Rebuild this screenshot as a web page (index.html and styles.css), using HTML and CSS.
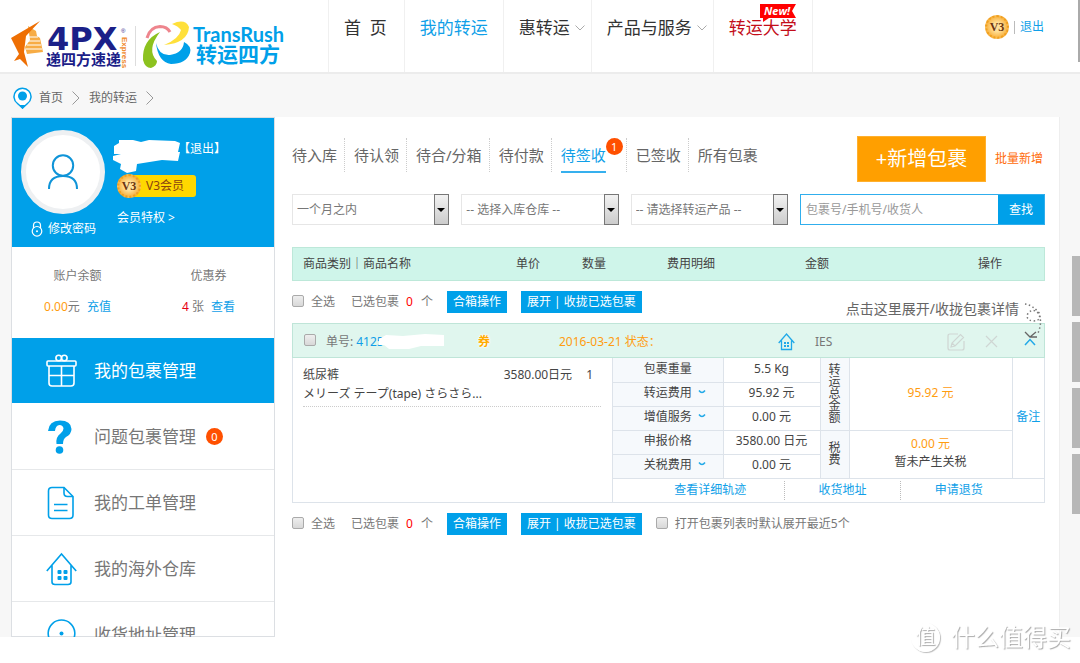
FILE: index.html
```html
<!DOCTYPE html>
<html lang="zh-CN">
<head>
<meta charset="utf-8">
<title>我的转运 - 转运四方</title>
<link rel="stylesheet" href="styles.css">
</head>
<body>
<div class="app">
  <header class="header">
    <a class="logo" href="#" aria-label="转运四方">
      <svg width="318" height="72" viewBox="0 0 318 72">
        <path d="M28 26 L36 31 L37 36 L40 38 L43 52 L27 54 L25 47 L30 40Z" fill="#f7ac45"/>
        <path d="M29 37h9M28 41h12M27 45h14M26 49h16" stroke="#fff" stroke-width="1"/>
        <path d="M40 21 L11 38 L19 54 L14 61 L20 59 L28 67 L24 52 L26 36Z" fill="#ee6f04"/>
        <text class="logo-4px" x="47" y="50">4PX</text>
        <text class="logo-cn" x="46" y="65">递四方速递</text>
        <text class="logo-express" transform="translate(122 37) rotate(90)">Express</text>
        <text class="logo-reg" x="121" y="33">®</text>
        <path d="M135.500 26v40" stroke="#ddd"/>
        <path d="M147 38 Q150 27 160 26.500 Q167 26.500 170 32" fill="none" stroke="#ee858d" stroke-width="3"/>
        <path d="M172 24 Q185 18 189 27 Q188 43 164 45 Q179 39 181 30 Q178 26 172 24Z" fill="#ffe03b"/>
        <path d="M160 32 Q142 40 143 60 Q145 68 151 68 Q157 66 157 61 Q146 50 160 32Z" fill="#8cc21f"/>
        <path d="M156 43 Q159 56 170 55 Q183 53 184 42 Q192 46 190 53 Q186 64 171 64 Q158 62 156 43Z" fill="#00a0e9"/>
        <text class="logo-en" x="193" y="42">TransRush</text>
        <text class="logo-cn2" x="196" y="62">转运四方</text>
      </svg>
    </a>
    <nav class="nav">
      <a href="#">首&nbsp; 页</a>
      <a href="#" class="nav-on">我的转运</a>
      <a href="#" class="nav-drop">惠转运<svg width="10" height="6" viewBox="0 0 10 6"><path d="M0.500 0.500 L5 5 L9.500 0.500"/></svg></a>
      <a href="#" class="nav-drop">产品与服务<svg width="10" height="6" viewBox="0 0 10 6"><path d="M0.500 0.500 L5 5 L9.500 0.500"/></svg></a>
      <a href="#" class="nav-red">转运大学<span class="new"><svg width="36" height="18" viewBox="0 0 36 18"><path d="M0 0H36L32 7L36 14H9L3 18V14H0Z" fill="#f00"/><text x="4" y="11">New!</text></svg></span></a>
    </nav>
    <div class="user">
      <span class="medal">V3</span><span class="bar"></span><a href="#">退出</a>
    </div>
  </header>

  <div class="crumbs">
    <svg width="20" height="22" viewBox="0 0 20 22"><path d="M9.500 21 L4.500 16.500 A8.500 8.500 0 1 1 14.500 16.500Z" fill="#fff" stroke="#00a0e9" stroke-width="1.500"/><path d="M6 18 L9.500 22 L13 18Z" fill="#00a0e9"/><circle cx="9.500" cy="9" r="4.500" fill="#00a0e9"/></svg>
    <a href="#">首页</a>
    <svg class="sep" width="8" height="14" viewBox="0 0 8 14"><path d="M0.500 0.500 L7 7 L0.500 13.500"/></svg>
    <a href="#">我的转运</a>
    <svg class="sep" width="8" height="14" viewBox="0 0 8 14"><path d="M0.500 0.500 L7 7 L0.500 13.500"/></svg>
  </div>

  <div class="main">
    <aside class="side">
      <section class="profile">
        <div class="profile-left">
          <div class="avatar"><svg width="30" height="36" viewBox="0 0 30 36"><g fill="none" stroke="#0f94d8" stroke-width="2"><circle cx="15" cy="11.500" r="10.200"/><path d="M1 35 Q1 22 15 22 Q29 22 29 35"/></g></svg></div>
          <a class="pwd" href="#"><svg width="12" height="16" viewBox="0 0 12 16"><g fill="none" stroke="#fff" stroke-width="1.200"><circle cx="6" cy="10.300" r="4.800"/><path d="M2.500 7V4.500a3.500 3.500 0 0 1 7 0V7"/></g><circle cx="6" cy="10.300" r="1" fill="#fff"/></svg>修改密码</a>
        </div>
        <div class="profile-right">
          <div class="who"><svg width="68" height="33" viewBox="0 0 68 33"><path d="M1 6 L6 3 L6 0 L20 0 L28 2 L36 0 L62 1 L67 3 L65 12 L67 12 L65 21 L49 20 L24 24 L23 31 L14 33 L7 29 L8 24 L0 20 L0 16 L8 14 L1 14Z" fill="#fff"/></svg><a href="#">【退出】</a></div>
          <div class="level"><span class="medal">V3</span><span class="tag">V3会员</span></div>
          <a class="priv" href="#">会员特权 &gt;</a>
        </div>
      </section>
      <section class="account">
        <div><h3>账户余额</h3><p><span class="orange">0.00</span>元 <a href="#">充值</a></p></div>
        <div><h3>优惠券</h3><p><span class="red">4</span> 张 <a href="#">查看</a></p></div>
      </section>
      <nav class="menu">
        <a href="#" class="menu-on"><svg width="32" height="34" viewBox="0 0 32 34"><g fill="none" stroke="#fff" stroke-width="1.600"><rect x="1" y="7" width="29" height="5" rx="1"/><path d="M3 12V29q0 3 3 3H25q3 0 3-3V12M15.500 12V32M3 21.500H28"/><circle cx="12.700" cy="4" r="2.800"/><circle cx="18.300" cy="4" r="2.800"/></g></svg>我的包裹管理</a>
        <a href="#"><svg width="32" height="34" viewBox="0 0 32 34"><path d="M2 11 Q3 0.500 14 0.500 Q25 0.500 25.500 9 Q25.500 14 20 17 Q17 19 17 24 H10.500 Q9.500 17 14.500 13.500 Q17.500 11 17.500 8.500 Q17 5 13.500 5 Q9.500 5.500 9 11Z" fill="#00a0e9"/><circle cx="13.500" cy="30" r="3.800" fill="#00a0e9"/></svg>问题包裹管理<span class="count">0</span></a>
        <a href="#"><svg width="32" height="34" viewBox="0 0 32 34"><g fill="none" stroke="#00a0e9" stroke-width="1.600"><path d="M18 1.500H6Q2.500 1.500 2.500 5V29Q2.500 32.500 6 32.500H23.500Q27 32.500 27 29V10.500Z"/><path d="M18 1.500V7Q18 10.500 21.500 10.500H27M8 18.500H21.500M8 24.500H21.500"/></g></svg>我的工单管理</a>
        <a href="#"><svg width="32" height="34" viewBox="0 0 32 34"><g fill="none" stroke="#00a0e9" stroke-width="1.600"><path d="M0.800 19 L15.500 2 L30.200 19M6 13.500V30Q6 32.500 9 32.500H22Q25 32.500 25 30V13.500"/></g><g fill="#00a0e9"><rect x="11.500" y="18" width="4" height="4" rx="1"/><rect x="17.500" y="18" width="4" height="4" rx="1"/><rect x="11.500" y="24" width="4" height="4" rx="1"/><rect x="17.500" y="24" width="4" height="4" rx="1"/></g></svg>我的海外仓库</a>
        <a href="#"><svg width="32" height="34" viewBox="0 0 32 34"><path d="M15.500 33 L5 23.500 A13.300 13.300 0 1 1 26 23.500Z" fill="none" stroke="#00a0e9" stroke-width="1.600"/><circle cx="15.500" cy="15.500" r="2" fill="#00a0e9"/></svg>收货地址管理</a>
      </nav>
    </aside>

    <main class="content">
      <div class="top">
        <nav class="tabs">
          <a href="#">待入库</a><a href="#">待认领</a><a href="#">待合/分箱</a><a href="#">待付款</a><a href="#" class="tab-on"><span>待签收</span><b class="count">1</b></a><a href="#">已签收</a><a href="#">所有包裹</a>
        </nav>
        <button class="add" type="button">+新增包裹</button>
        <a class="batch" href="#">批量新增</a>
      </div>

      <form class="filters">
        <div class="pick"><select aria-label="时间"><option>一个月之内</option></select></div>
        <div class="pick"><select aria-label="仓库"><option>-- 选择入库仓库 --</option></select></div>
        <div class="pick"><select aria-label="转运产品"><option>-- 请选择转运产品 --</option></select></div>
        <div class="search"><input type="text" aria-label="搜索" placeholder="包裹号/手机号/收货人"><button type="button">查找</button></div>
      </form>

      <table class="head">
        <tr><th class="c-name">商品类别｜商品名称</th><th class="c-price">单价</th><th class="c-num">数量</th><th class="c-fee">费用明细</th><th class="c-sum">金额</th><th>操作</th></tr>
      </table>

      <div class="tools">
        <label class="all"><input type="checkbox">全选</label>
        <span class="chosen">已选包裹<b>0</b>个</span>
        <button type="button">合箱操作</button>
        <button type="button">展开 | 收拢已选包裹</button>
        <span class="hint">点击这里展开/收拢包裹详情
          <svg width="20" height="44" viewBox="0 0 20 44"><path d="M2 3 Q10 4 17 13 Q18 20 10 20 Q2 19 5 12 Q10 7 15 12 Q20 20 15 32" fill="none" stroke="#777" stroke-dasharray="1.500 2.500" stroke-width="1.500"/><path d="M2 31 L7 36 L14 36M7 36 L13 31" fill="none" stroke="#666" stroke-width="1.300"/></svg>
        </span>
      </div>

      <article class="order">
        <header class="order-head">
          <div class="no"><input type="checkbox" aria-label="选择包裹"><span>单号:</span><a href="#">4125</a><svg width="66" height="16" viewBox="0 0 66 16"><path d="M0 5 L7 1 L24 2 L46 0 L65 1 L65 12 L42 12 L30 15 L10 15 L5 11 L0 11Z" fill="#fff"/></svg></div>
          <b class="coupon">券</b>
          <span class="orange">2016-03-21 状态：</span>
          <svg width="17" height="18" viewBox="0 0 17 18"><path d="M0.700 10 L8.500 1 L16.300 10M3.500 7.500V16.500H13.500V7.500" fill="none" stroke="#21a9e8" stroke-width="1.300"/><path d="M6 9h2v2H6zM9 9h2v2H9zM6 12h2v2H6zM9 12h2v2H9z" fill="#21a9e8"/></svg>
          <span>IES</span>
          <div class="acts">
            <svg width="18" height="18" viewBox="0 0 18 18"><path d="M11 1H3Q1 1 1 3V15Q1 17 3 17H15Q17 17 17 15V8M4 14 L5 10 L13.500 1.500 L16.500 4.500 L8 13ZM5 10 L8 13" fill="none" stroke="#cfd6d3" stroke-width="1.200"/></svg>
            <svg width="13" height="13" viewBox="0 0 13 13"><path d="M1 1 L12 12M12 1 L1 12" stroke="#cfd6d3" stroke-width="1.200"/></svg>
            <svg width="12" height="8" viewBox="0 0 12 8"><path d="M1 7 L6 1.500 L11 7" fill="none" stroke="#21a9e8" stroke-width="1.500"/></svg>
          </div>
        </header>
        <div class="order-body">
          <div class="goods">
            <div class="good">
              <span>纸尿裤</span><span class="price">3580.00日元</span><span>1</span>
              <p>メリーズ テープ(tape) さらさら...</p>
            </div>
          </div>
          <div class="detail">
            <table class="fees">
              <tr><th class="f-label">包裹重量</th><td class="f-val">5.5 Kg</td><th class="f-side" rowspan="3">转运总金额</th><td class="orange" rowspan="3">95.92 元</td><td class="f-note" rowspan="5"><a href="#">备注</a></td></tr>
              <tr><th>转运费用<svg width="8" height="4" viewBox="0 0 8 4"><path d="M1 0.500 Q4 4.500 7 0.500"/></svg></th><td>95.92 元</td></tr>
              <tr><th>增值服务<svg width="8" height="4" viewBox="0 0 8 4"><path d="M1 0.500 Q4 4.500 7 0.500"/></svg></th><td>0.00 元</td></tr>
              <tr><th>申报价格</th><td>3580.00 日元</td><th class="f-side" rowspan="2">税费</th><td class="tax" rowspan="2"><span class="orange">0.00 元</span><br>暂未产生关税</td></tr>
              <tr><th>关税费用<svg width="8" height="4" viewBox="0 0 8 4"><path d="M1 0.500 Q4 4.500 7 0.500"/></svg></th><td>0.00 元</td></tr>
            </table>
            <div class="links"><a href="#">查看详细轨迹</a><a href="#">收货地址</a><a href="#">申请退货</a></div>
          </div>
        </div>
      </article>

      <div class="tools">
        <label class="all"><input type="checkbox">全选</label>
        <span class="chosen">已选包裹<b>0</b>个</span>
        <button type="button">合箱操作</button>
        <button type="button">展开 | 收拢已选包裹</button>
        <label class="recent"><input type="checkbox">打开包裹列表时默认展开最近5个</label>
      </div>
    </main>
  </div>
</div>
<div class="edge"></div>
<div class="dock"><i></i><i></i><i></i><i></i></div>
<div class="mark"><span>值</span>什么值得买</div>
</body>
</html>
```
FILE: styles.css
```css
* { box-sizing: border-box; }
body {
  margin: 0;
  height: 100vh;
  padding-bottom: 26px;
  background: #fff;
  color: #777;
  font: 12px/18px "Noto Sans", "Noto Sans CJK SC", sans-serif;
  overflow: hidden;
}
a { color: #109fe8; text-decoration: none; }
h3, p { margin: 0; font-weight: 400; font-size: 12px; }
th { font-weight: 400; }
svg { display: block; flex: none; }
button, input, select { font: inherit; }
button { border: 0; background: #00a0e9; color: #fff; padding: 0; white-space: nowrap; }
input[type="checkbox"] {
  appearance: none;
  flex: none;
  width: 12px;
  height: 12px;
  margin: 0;
  border: 1px solid #aaa;
  border-radius: 2px;
  background: linear-gradient(#eee, #d8d8d8);
}
.orange { color: #ff9c10; }
.red { color: #e60012; }
.app { height: 100%; overflow: hidden; display: flex; flex-direction: column; background: #f7f7f7; }

.header { flex: none; display: flex; height: 74px; background: #fff; border-bottom: 2px solid #ececec; }
.logo { width: 328px; }
.logo-4px { font: bold 32px "DejaVu Sans", sans-serif; fill: #1b2088; }
.logo-cn { font: bold 15px "Noto Sans CJK SC", sans-serif; fill: #1b2088; }
.logo-express { font: bold 8px "Liberation Sans", sans-serif; fill: #f08a2c; }
.logo-reg { font: 6px "Liberation Sans", sans-serif; fill: #1b2088; }
.logo-en { font: bold 20px Lato, sans-serif; fill: #00a0e9; }
.logo-cn2 { font: bold 21px "Noto Sans CJK SC", sans-serif; fill: #00a0e9; }
.nav { display: flex; border-right: 1px solid #f0f0f0; }
.nav a {
  position: relative;
  display: flex;
  gap: 5px;
  padding: 16px 15px 0;
  border-left: 1px solid #f0f0f0;
  color: #333;
  font-size: 17px;
  line-height: 24px;
  white-space: nowrap;
}
.nav a:first-child { padding-right: 17px; }
.nav .nav-on { color: #109fe8; }
.nav .nav-red { color: #c30d1a; }
.nav .nav-drop { padding-right: 6px; }
.nav-drop svg { margin-top: 9px; fill: none; stroke: #aaa; }
.new { position: absolute; right: 16px; top: 4px; }
.new text { font: italic bold 11px "Open Sans", sans-serif; fill: #fff; }
.user { display: flex; align-items: center; height: 54px; margin-left: auto; padding-right: 36px; }
.medal {
  display: block;
  width: 24px;
  height: 24px;
  border: 2px dotted #f0a020;
  border-radius: 50%;
  background: radial-gradient(#ffe09a 30%, #f59a10);
  color: #6b3410;
  font: bold 12px/20px "Liberation Serif", serif;
  text-align: center;
}
.bar { width: 1px; height: 13px; margin: 0 5px; background: #bbb; }

.crumbs { flex: none; display: flex; align-items: center; height: 43px; padding: 4px 0 0 13px; gap: 9px; }
.crumbs > svg:first-child { margin-right: -3px; }
.crumbs a { color: #666; }
.sep { fill: none; stroke: #999; }

.main { flex: 1; display: flex; min-height: 0; margin: 0 20px 0 11px; }
.side { flex: none; width: 264px; border: 1px solid #dcdfe3; background: #fff; }
.profile { display: flex; gap: 8px; padding: 12px 0 0 9px; height: 129px; background: #00a0e9; }
.profile a { color: #fff; }
.avatar { display: flex; align-items: center; justify-content: center; width: 84px; height: 84px; border: 5px solid #eef0f2; border-radius: 50%; background: #fff; }
.pwd { display: flex; align-items: center; gap: 5px; padding: 6px 0 0 10px; white-space: nowrap; }
.who { display: flex; height: 33px; margin-top: 10px; }
.who a { margin-left: -3px; }
.level { display: flex; align-items: center; margin-left: 4px; height: 25px; }
.level .medal { position: relative; }
.tag { height: 22px; margin-left: -12px; padding: 0 12px 0 17px; border-radius: 3px; background: #ffd800; color: #8a4310; line-height: 22px; }
.priv { display: block; margin: 11px 0 0 4px; }
.account { display: grid; grid-template-columns: 1fr 1fr; height: 91px; padding-top: 20px; text-align: center; }
.account p { margin-top: 13px; }
.account a { margin-left: 4px; }
.menu a { display: flex; align-items: center; height: 66px; padding-left: 34px; border-bottom: 1px solid #e6e8ea; color: #777; font-size: 17px; }
.menu svg { margin-right: 16px; }
.menu .menu-on { border-color: #fff; background: #00a0e9; color: #fff; }
.count { width: 17px; height: 17px; border-radius: 50%; background: #ff5000; color: #fff; font: 11px/17px "Noto Sans", sans-serif; text-align: center; }
.menu .count { margin-left: 10px; }

.content { flex: 1; min-width: 0; padding: 19px 14px 0 17px; background: #fff; border-right: 1px solid #eee; }
.top { display: flex; }
.tabs { display: flex; flex: 1; margin-top: 2px; }
.tabs a { height: 34px; padding: 0 7px 0 9px; border-right: 1px dotted #ccc; color: #666; font-size: 15px; line-height: 34px; white-space: nowrap; }
.tabs a:first-child { padding-left: 0; }
.tabs a:last-child { border: 0; }
.tabs .tab-on { position: relative; padding-right: 20px; color: #109fe8; }
.tab-on span { display: block; border-bottom: 2px solid #36b0ee; height: 35px; }
.tab-on .count { position: absolute; right: 3px; top: 0; }
.add { width: 129px; height: 46px; border: 1px solid #ffb02e; background: #ff9f00; font-size: 20px; }
.batch { margin: 0 2px 0 9px; line-height: 46px; color: #ff6c0a; white-space: nowrap; }
.filters { display: flex; gap: 12px; margin-top: 12px; }
.pick { position: relative; flex: 158; }
.pick select { display: block; appearance: none; width: 100%; height: 31px; padding: 0 20px 0 4px; border: 1px solid #e6e6e6; border-radius: 0; background: #fff; color: #777; }
.pick::before { content: ""; position: absolute; right: 0; top: 0; width: 15px; height: 31px; box-sizing: border-box; border: 1px solid #777; background: linear-gradient(#f2f2f2, #ccc); pointer-events: none; }
.pick::after { content: ""; position: absolute; right: 4px; top: 14px; border: 4px solid transparent; border-top-color: #000; border-bottom: 0; pointer-events: none; }
.search { display: flex; flex: 244; border: 1px solid #30aeed; }
.search input { flex: 1; min-width: 0; padding: 0 5px; border: 0; color: #777; }
.search input::placeholder { color: #999; }
.search button { width: 46px; }

.head { width: 100%; height: 34px; margin-top: 22px; border: 1px solid #bde8d9; border-spacing: 0; background: #cff5ea; color: #444; table-layout: fixed; text-align: left; }
.head th { padding: 0; }
.head .c-name { width: 223px; padding-left: 10px; }
.c-price { width: 66px; }
.c-num { width: 85px; }
.c-fee { width: 138px; }
.c-sum { width: 173px; }
.tools { position: relative; display: flex; align-items: center; height: 22px; margin-top: 10px; white-space: nowrap; }
.tools label { display: flex; align-items: center; gap: 7px; }
.tools label input { margin-bottom: 2px; }
.chosen { margin: 0 14px 0 16px; }
.chosen b { margin: 0 8px 0 7px; color: #f00; font-weight: 400; }
.tools button { height: 22px; margin-right: 14px; padding: 0 6px; }
.hint { position: relative; margin: 14px 26px 0 auto; color: #666; font-size: 14px; }
.hint svg { position: absolute; left: 100%; top: 1px; margin-left: 4px; }
.order { margin-top: 10px; border: 1px solid #dde3ea; }
.order-head { display: grid; grid-template-columns: 174fr 81fr 219fr 37fr 80fr 141fr; align-items: center; height: 35px; margin: -1px -1px 0; padding: 2px 8px 0 11px; border: 1px solid #bfe5d8; background: #e0f6ee; white-space: nowrap; }
.no { display: flex; align-items: center; gap: 3px; }
.no input { margin: 0 7px 4px 0; }
.no svg { margin-left: -8px; }
.coupon { color: #ffab00; text-shadow: 0 0 2px #fff, 0 0 2px #fff, 0 0 3px #fff; }
.acts { display: flex; align-items: center; justify-content: flex-end; gap: 20px; }
.acts svg:last-child { margin-left: 6px; }
.order-body { display: grid; grid-template-columns: 319fr 432fr; color: #444; }
.goods { padding: 8px 11px 0 10px; }
.good { display: grid; grid-template-columns: 1fr auto auto; padding: 0 8px 3px 0; border-bottom: 1px dotted #ccc; }
.good p { grid-column: 1 / 4; margin-top: 1px; }
.price { margin-right: 14px; }
.detail { border-left: 1px solid #dde3ea; }
.fees { width: 100%; border-collapse: collapse; table-layout: fixed; text-align: center; }
.fees th, .fees td { height: 24px; padding: 0 0 2px; border: 1px solid #dde3ea; border-top: 0; }
.fees tr > :first-child { border-left: 0; }
.fees tr > .f-note { width: 32px; border-right: 0; }
.fees th { background: #f6f9fc; }
.fees .f-label { width: 110px; }
.fees .f-val { width: 97px; }
.fees .f-side { width: 29px; padding: 0 8px; line-height: 12px; word-break: break-all; }
.fees th svg { display: inline-block; margin: 0 -14px 3px 6px; fill: none; stroke: #21a9e8; stroke-width: 1.5; }
.links { display: grid; grid-template-columns: 172fr 117fr 143fr; height: 23px; }
.links a { margin: 2px 0; border-right: 1px dotted #bbb; line-height: 18px; text-align: center; }
.links a:first-child { padding-left: 24px; }
.links a:last-child { border: 0; padding-right: 28px; }

.edge { position: fixed; right: 0; top: 0; width: 2px; height: 62px; background: #aaa; }
.dock { position: fixed; right: 0; top: 256px; display: grid; gap: 6px; }
.dock i { width: 8px; height: 60px; background: #b7b7b7; }
.mark { position: fixed; right: 9px; bottom: 11px; display: flex; align-items: center; gap: 11px; color: #fff; font-size: 24px; line-height: 30px; text-shadow: 1px 1px 1px #aaa; }
.mark span { width: 29px; height: 29px; border: 1px solid #fff; border-radius: 50%; box-shadow: 1px 1px 1px #bbb; font-size: 20px; line-height: 26px; text-align: center; }
```
